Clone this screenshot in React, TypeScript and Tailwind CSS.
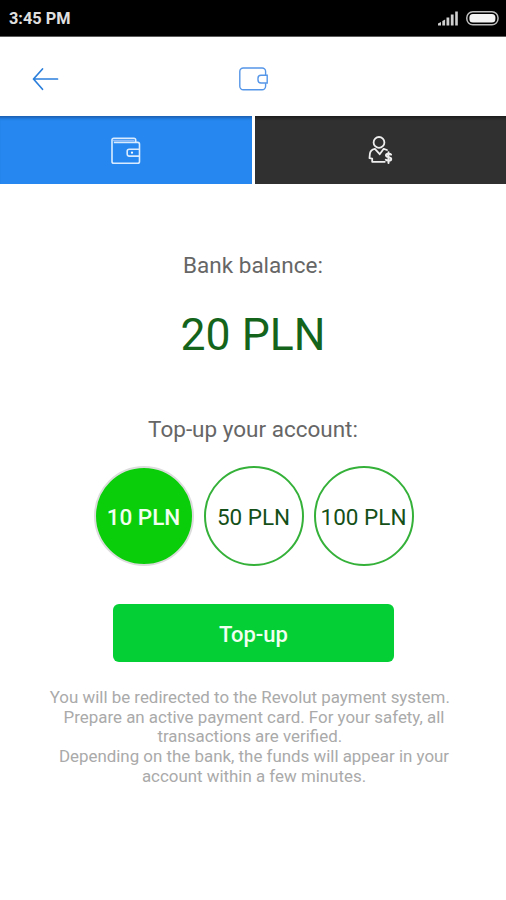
import React from "react";

const amounts = [
  { label: "10 PLN", active: true },
  { label: "50 PLN", active: false },
  { label: "100 PLN", active: false },
];

const notes = [
  "You will be redirected to the Revolut payment system.  ",
  "Prepare an active payment card. For your safety, all",
  "transactions are verified.  ",
  "Depending on the bank, the funds will appear in your",
  "account within a few minutes.",
];

const StatusBar = () => {
  return (
    <div className="flex h-[37px] items-center justify-between border-b border-[#5c5c5c] bg-black pl-[9px] pr-[7px]">
      <p className="pt-[3px] text-[16.3px] font-bold leading-none text-[#e0e0e0]">3:45 PM</p>
      <div className="flex items-center gap-[7px]">
        <svg width="21" height="15" viewBox="0 0 21 15" fill="#d0d0d0">
          <path d="M0 14.500v-2l3-1.500v3.500z" />
          <path d="M4.300 14.500V10l2.800-1.500v6z" />
          <rect x="8.500" y="6.500" width="2.800" height="8" />
          <rect x="12.800" y="3.500" width="2.800" height="11" />
          <rect x="17.200" y="0.500" width="2.600" height="14" />
        </svg>
        <svg width="33" height="15" viewBox="0 0 33 15" fill="none">
          <rect x="0.8" y="0.8" width="31.2" height="13" rx="6" stroke="#bdbdbd" strokeWidth="1.5" />
          <rect x="3.400" y="3" width="26" height="8.600" rx="3.500" fill="#f4f4f4" />
        </svg>
      </div>
    </div>
  );
};

const Header = () => {
  return (
    <div className="grid h-[79px] grid-cols-[1fr_30px_1fr] items-center bg-white pt-[5px]">
      <svg className="ml-[32px]" width="28" height="24" viewBox="0 0 28 24" fill="none" stroke="#2b7fdb" strokeWidth="1.7" strokeLinecap="round" strokeLinejoin="round">
        <path d="M25.500 12H1.500M10.500 2 1.500 12l9 10.300" />
      </svg>
      <svg width="30" height="26" viewBox="0 0 30 26" fill="none" stroke="#5596e8" strokeWidth="1.4">
        <path d="M27.600 9V5.500a3.500 3.500 0 0 0-3.500-3.500H5.300a3.500 3.500 0 0 0-3.500 3.500v14.700a3.500 3.500 0 0 0 3.500 3.500h18.800a3.500 3.500 0 0 0 3.500-3.500V17.300" />
        <path d="M29.200 9.200h-6.200a3 3 0 0 0-3 3v1.800a3 3 0 0 0 3 3h6.200z" />
      </svg>
    </div>
  );
};

const Tabs = () => {
  return (
    <div className="flex h-[68px] gap-[3px]">
      <button className="flex w-[252px] items-center justify-center bg-[#2587ef] pt-[2px] shadow-[inset_0_4px_3px_-2px_#1b5fb0]">
        <svg width="30" height="28" viewBox="0 0 30 28" fill="none" stroke="#d9ebff" strokeWidth="1.6" strokeLinejoin="round">
          <path d="M24.700 5.400V3a1.800 1.800 0 0 0-1.800-1.800H2.800A1.800 1.800 0 0 0 1 3v21.400a1.800 1.800 0 0 0 1.800 1.800h23.900a1.800 1.800 0 0 0 1.800-1.800V7.200a1.800 1.800 0 0 0-1.800-1.800H2.800" />
          <path d="M2 3.400h21.500" stroke="#8fbcf8" />
          <path d="M28.500 12.200H18.200a2 2 0 0 0-2 2v2.900a2 2 0 0 0 2 2h10.300" />
          <circle cx="21" cy="15.700" r="1.100" fill="#fff" stroke="none" />
        </svg>
      </button>
      <button className="flex flex-1 items-center justify-center bg-[#303030] pr-[2px] shadow-[inset_0_4px_3px_-2px_#1c1c1c]">
        <svg width="26" height="30" viewBox="0 0 26 30" fill="none" stroke="#eeeeee" strokeWidth="1.8" strokeLinecap="round" strokeLinejoin="round">
          <circle cx="12" cy="7.400" r="5.400" />
          <path d="M20 15l-3.300-1.200-4 5.400-4.800-5.400c-3.200.6-4.800 2.300-5 5l-.4 4.400 2.700.4v3.200h12.600" />
          <path d="M24 19.600c-.8-1.300-5-1.400-5 .8s5.200 1.200 5.200 3.500-4.300 2.300-5.400.8M21.500 17.200v10.800" strokeWidth="2" />
        </svg>
      </button>
    </div>
  );
};

const App = () => {
  return (
    <div className="h-[900px] w-full overflow-hidden bg-white font-[Roboto,sans-serif]">
      <StatusBar />
      <Header />
      <Tabs />
      <main className="flex flex-col items-center">
        <p className="mt-[66px] text-[22.5px] leading-[30px] text-[#666666]">Bank balance:</p>
        <p className="mt-[25px] text-[44.5px] leading-[60px] text-[#14641c]">20 PLN</p>
        <p className="mt-[49px] text-[22.5px] leading-[30px] text-[#666666]">Top-up your account:</p>
        <div className="mt-[22px] flex gap-[10px] pl-px">
          {amounts.map((item) => (
            <button
              key={item.label}
              className={
                item.active
                  ? "h-[100px] w-[100px] whitespace-nowrap rounded-full border-2 border-[#dcdcdc] bg-[#0bce0b] pt-[3px] text-[22.5px] font-medium text-[#f1fff1]"
                  : "h-[100px] w-[100px] whitespace-nowrap rounded-full border-2 border-[#35b13a] bg-white pt-[3px] text-[22.5px] text-[#145018]"
              }
            >
              {item.label}
            </button>
          ))}
        </div>
        <button className="ml-px mt-[38px] h-[58px] w-[281px] rounded-md bg-[#04cf35] pt-[3px] text-[22px] font-medium text-[#f1fff1]">
          Top-up
        </button>
        <div className="mt-[26px] pl-[2px] text-center text-[16.9px] leading-[19.7px] text-[#aaaaaa]">
          {notes.map((line) => (
            <p key={line} className="whitespace-pre">
              {line}
            </p>
          ))}
        </div>
      </main>
    </div>
  );
};

export default App;
